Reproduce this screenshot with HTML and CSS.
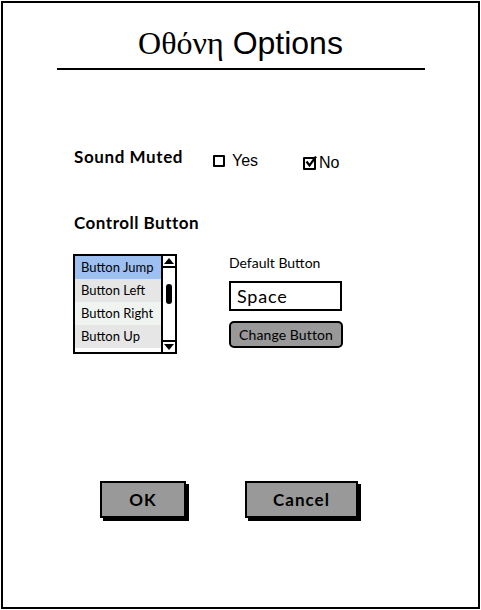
FILE: index.html
```html
<!DOCTYPE html>
<html>
<head>
<meta charset="utf-8">
<link rel="stylesheet" href="styles.css">
</head>
<body>
<div class="frame">
  <h1 class="title"><span class="greek">Οθόνη</span> Options</h1>
  <div class="rule"></div>
  <div class="content">
    <div class="sound-row">
      <div class="label sound-label">Sound Muted</div>
      <div class="opt opt-yes"><span class="cb"></span><span>Yes</span></div>
      <div class="opt opt-no"><span class="cb checked"><svg width="13" height="13" viewBox="0 0 13 13"><path d="M2.5 5.5 L5.5 9.5 L12 0.5" fill="none" stroke="#000" stroke-width="2.2"/></svg></span><span>No</span></div>
    </div>
    <div class="label control-label">Controll Button</div>
    <div class="control-row">
      <div class="listbox">
        <div class="items">
          <div class="item sel">Button Jump</div>
          <div class="item alt">Button Left</div>
          <div class="item">Button Right</div>
          <div class="item alt">Button Up</div>
        </div>
        <div class="scroll">
          <div class="arrow up"></div>
          <div class="track"><div class="thumb"></div></div>
          <div class="arrow down"></div>
        </div>
      </div>
      <div class="default">
        <div class="small-label">Default Button</div>
        <div class="textbox">Space</div>
        <div class="change-btn">Change Button</div>
      </div>
    </div>
  </div>
  <div class="actions">
    <div class="btn ok">OK</div>
    <div class="btn cancel">Cancel</div>
  </div>
</div>
</body>
</html>
```

FILE: styles.css
```css
html, body {
  margin: 0;
  padding: 0;
  background: #fff;
}
body {
  font-family: "Lato", "Liberation Sans", sans-serif;
  color: #000;
}
.frame {
  box-sizing: border-box;
  width: 479px;
  height: 608px;
  margin: 1px 0 0 1px;
  border: 2px solid #000;
  display: flex;
  flex-direction: column;
}
.title {
  margin: 22px 0 0 0;
  font-family: "Liberation Sans", sans-serif;
  font-weight: normal;
  font-size: 32px;
  line-height: 36px;
  text-align: center;
}
.greek {
  font-family: "Liberation Serif", serif;
}
.rule {
  height: 2px;
  background: #000;
  margin: 7px 53px 0 54px;
}
.content {
  padding-left: 71px;
}
.label {
  font-weight: bold;
  font-size: 17px;
  line-height: 20px;
  letter-spacing: 0.6px;
}
.sound-row {
  display: flex;
  align-items: flex-start;
  margin-top: 77px;
}
.sound-label {
  width: 139px;
}
.opt {
  display: flex;
  align-items: center;
  gap: 7px;
  font-family: "Liberation Sans", sans-serif;
  font-size: 16px;
  line-height: 20px;
}
.opt-yes {
  width: 90px;
  margin-top: 4px;
}
.opt-no {
  margin-top: 6px;
  gap: 3px;
}
.cb {
  box-sizing: border-box;
  width: 12px;
  height: 12px;
  border: 2px solid #000;
  border-radius: 1px;
  position: relative;
}
.cb.checked {
  width: 13px;
  height: 13px;
}
.cb svg {
  position: absolute;
  left: -1px;
  top: -3px;
}
.control-label {
  margin-top: 40px;
  letter-spacing: 0.5px;
}
.control-row {
  display: flex;
  margin-top: 21px;
}
.listbox {
  box-sizing: border-box;
  width: 104px;
  height: 100px;
  margin-left: -1px;
  border: 2px solid #000;
  display: flex;
}
.items {
  width: 86px;
  font-size: 13px;
}
.item {
  height: 23px;
  line-height: 23px;
  padding-left: 6px;
  background: #f0f4f0;
}
.item.sel {
  background: #9ec0f0;
}
.item.alt {
  background: #e6e6e6;
}
.scroll {
  flex: 1;
  border-left: 2px solid #000;
  display: flex;
  flex-direction: column;
  align-items: center;
}
.arrow {
  width: 0;
  height: 0;
  border-left: 5px solid transparent;
  border-right: 5px solid transparent;
  margin: 2px 0;
}
.arrow.up {
  border-bottom: 6px solid #000;
}
.arrow.down {
  border-top: 6px solid #000;
}
.track {
  flex: 1;
  width: 100%;
  border-top: 2px solid #000;
  border-bottom: 2px solid #000;
  display: flex;
  justify-content: center;
}
.thumb {
  width: 6px;
  height: 20px;
  margin-top: 16px;
  background: #000;
  border-radius: 3px;
}
.default {
  margin-left: 52px;
  margin-top: 1px;
}
.small-label {
  font-size: 14px;
  line-height: 16px;
}
.textbox {
  box-sizing: border-box;
  width: 113px;
  height: 30px;
  margin-top: 10px;
  border: 2px solid #000;
  font-size: 18px;
  letter-spacing: 0.8px;
  line-height: 26px;
  padding-left: 6px;
}
.change-btn {
  box-sizing: border-box;
  width: 114px;
  height: 27px;
  margin-top: 10px;
  border: 2px solid #000;
  border-radius: 5px;
  background: #999;
  font-size: 14px;
  letter-spacing: 0.1px;
  line-height: 23px;
  text-align: center;
}
.actions {
  display: flex;
  margin-top: auto;
  margin-bottom: 89px;
  padding-left: 97px;
  gap: 59px;
}
.btn {
  box-sizing: border-box;
  height: 37px;
  border: 2px solid #000;
  background: #999;
  box-shadow: 3px 3px 0 #000;
  font-weight: bold;
  font-size: 17px;
  letter-spacing: 1px;
  line-height: 33px;
  text-align: center;
}
.btn.ok {
  width: 86px;
}
.btn.cancel {
  width: 113px;
}
```
